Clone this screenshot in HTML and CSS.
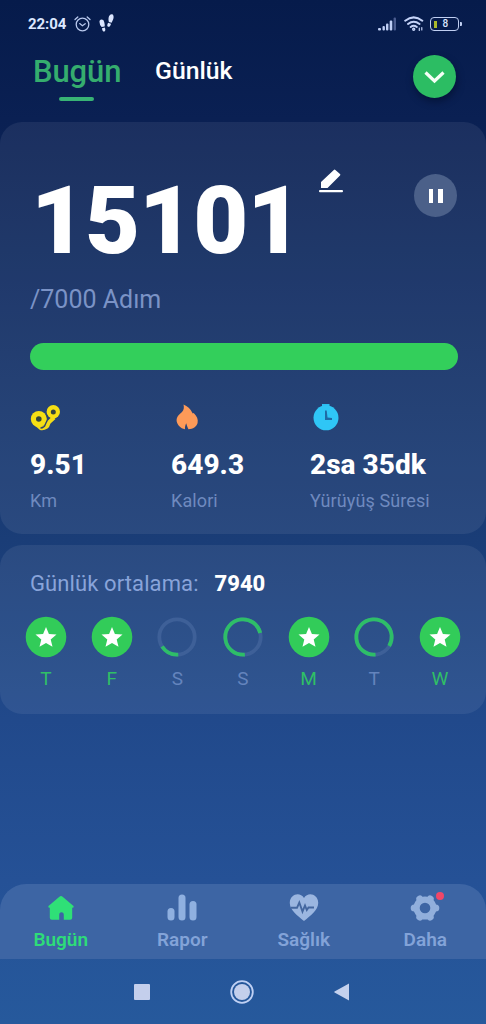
FILE: index.html
```html
<!DOCTYPE html>
<html lang="tr">
<head>
<meta charset="utf-8">
<title>Bugün</title>
<link rel="stylesheet" href="styles.css">
</head>
<body>
<div class="screen">
  <div class="status">
    <div class="status-left">
      <span class="clock">22:04</span>
      <svg class="alarm" width="17" height="16" viewBox="0 0 17 16" fill="none" stroke="#b9c9ee" stroke-width="1.3" stroke-linecap="round"><circle cx="8.500" cy="8.500" r="6.300"/><path d="M1 3.600 3.800 1M16 3.600 13.200 1M5.700 7.600l2.700 2.100 2.800-2"/></svg>
      <svg class="steps" width="15" height="18" viewBox="0 0 15 18" fill="#dce6ff"><path d="M.6 6.800Q2 4.500 4.300 6 6.200 9 5.600 12.500L2.600 13Q0 10 .6 6.800zM3 14.200l2.800-.6q1.200 2.800-.3 3.900-2.200.4-2.500-3.300zM10 2.300Q11.500-.8 13.900.6q1.300 2 .2 5l-1.500 3.100-2.700-.8q-.9-3 .1-5.600zM9.100 8.800l2.900.9q-.6 3.300-2.900 3.100-1.700-1 0-4z"/></svg>
    </div>
    <div class="status-right">
      <svg class="signal" width="19" height="14" viewBox="0 0 19 14"><g fill="#c0cff5"><rect x="0" y="11" width="3" height="2.500" rx="1"/><rect x="4.500" y="9" width="2.400" height="4.500" rx="1"/><rect x="8" y="6.500" width="2.400" height="7" rx="1"/><rect x="11.700" y="3.500" width="2.600" height="10" rx="1"/></g><rect x="15.600" y="0.500" width="2.400" height="13" rx="1" fill="#4a5c8f"/></svg>
      <svg class="wifi" width="20" height="16" viewBox="0 0 20 16" fill="none" stroke="#c5d3f8" stroke-width="2" stroke-linecap="round"><path d="M1.200 4.700Q9.700-1.900 18.300 4.700M4 8Q9.700 3.500 15.500 8M6.700 11Q9.700 8.600 12.800 11"/><circle cx="9.700" cy="13.300" r=".7"/><path d="M15.300 12v2.500M17.800 11.500v2.500" stroke-width="1.200"/></svg>
      <div class="battery"><span class="charge"></span><span class="percent">8</span></div>
    </div>
  </div>

  <header class="header">
    <div class="tab tab-active">Bugün</div>
    <div class="tab">Günlük</div>
    <div class="expand"><svg width="43" height="43" viewBox="0 0 43 43" fill="none" stroke="#f4fff6" stroke-width="3.200"><path d="M12.500 17.500l9 8.500 9-8.500"/></svg></div>
  </header>

  <section class="card today">
    <div class="count-row">
      <div class="count">15101</div>
      <svg class="edit" width="26" height="28" viewBox="0 0 26 28" fill="#fff"><path d="M3 20v-6L15.800 2q.8-.8 1.600 0l4.600 4q.8.800 0 1.600L9.500 20z"/><rect x="1" y="22" width="24" height="2.200" rx="1"/></svg>
      <div class="pause"><i></i><i></i></div>
    </div>
    <div class="goal">/7000 Adım</div>
    <div class="bar"></div>
    <div class="stats">
      <div class="stat">
        <svg width="31" height="28" viewBox="0 0 31 28"><path d="M3 20l7 6q3.500 1 7.500-1.500 2-1.500 3-5l5-4.500-3-3-6.500 6.500-3.500 4z" fill="#f3dc18"/><circle cx="8.800" cy="15" r="8" fill="#f6df14"/><circle cx="23.300" cy="7.700" r="6.700" fill="#f6df14"/><path d="M10.500 24q3.800-.2 4.800-3.500l1.700-3.800M16.300 10.500l1.700 4" fill="none" stroke="#2c426b" stroke-width="1.300"/><circle cx="8.800" cy="15" r="2.800" fill="#34463c"/><circle cx="23.300" cy="8" r="2.500" fill="#34463c"/></svg>
        <div class="value">9.51</div><div class="label">Km</div>
      </div>
      <div class="stat">
        <svg class="flame" width="24" height="28" viewBox="0 0 24 28"><path d="M7.500.5c4 1.500 7 4.500 8.800 8.300l.5.700.9-.6c3.300 3.500 4.600 6.100 3.900 10.100-1 3.800-4.600 6-9.100 6.300-.9-1.700-1.600-3.600-2.300-6.100-.9 2-1.400 4-1.200 6.100C4.300 24.300 1.500 21 .7 17.500 0 13 3 10.500 6 8c1.800-2 2.300-4.500 1.500-7.500z" fill="#fd9a58"/></svg>
        <div class="value">649.3</div><div class="label">Kalori</div>
      </div>
      <div class="stat">
        <svg class="watch" width="26" height="28" viewBox="0 0 26 28"><path d="M9 0h7.500v3H9z" fill="#2bbef2"/><circle cx="13" cy="13.800" r="12.500" fill="#2fc6f6"/><path d="M12 6.500h1.700l.8 7 4.500.5v2h-7z" fill="#1f6aa5"/></svg>
        <div class="value">2sa 35dk</div><div class="label">Yürüyüş Süresi</div>
      </div>
    </div>
  </section>

  <section class="card week">
    <div class="average"><span>Günlük ortalama:</span><b>7940</b></div>
    <div class="days">
      <div class="day done"><svg width="42" height="42" viewBox="0 0 42 42"><circle cx="21" cy="21" r="20.300"/><path d="M21 11l2.900 7 7.600.6-5.800 4.900 1.800 7.300-6.500-3.900-6.500 3.900 1.800-7.300-5.800-4.900 7.600-.6z"/></svg>T</div>
      <div class="day done"><svg width="42" height="42" viewBox="0 0 42 42"><circle cx="21" cy="21" r="20.300"/><path d="M21 11l2.900 7 7.600.6-5.800 4.900 1.800 7.300-6.500-3.900-6.500 3.900 1.800-7.300-5.800-4.900 7.600-.6z"/></svg>F</div>
      <div class="day"><svg width="42" height="42" viewBox="0 0 42 42"><circle class="track" cx="21" cy="21" r="17.700"/><circle class="arc" cx="21" cy="21" r="17.700" pathLength="100" stroke-dasharray="17 83" transform="rotate(86 21 21)"/></svg>S</div>
      <div class="day"><svg width="42" height="42" viewBox="0 0 42 42"><circle class="track" cx="21" cy="21" r="17.700"/><circle class="arc" cx="21" cy="21" r="17.700" pathLength="100" stroke-dasharray="73 27" transform="rotate(84 21 21)"/></svg>S</div>
      <div class="day done"><svg width="42" height="42" viewBox="0 0 42 42"><circle cx="21" cy="21" r="20.300"/><path d="M21 11l2.900 7 7.600.6-5.800 4.900 1.800 7.300-6.500-3.900-6.500 3.900 1.800-7.300-5.800-4.900 7.600-.6z"/></svg>M</div>
      <div class="day"><svg width="42" height="42" viewBox="0 0 42 42"><circle class="track" cx="21" cy="21" r="17.700"/><circle class="arc" cx="21" cy="21" r="17.700" pathLength="100" stroke-dasharray="85 15" transform="rotate(85 21 21)"/></svg>T</div>
      <div class="day done"><svg width="42" height="42" viewBox="0 0 42 42"><circle cx="21" cy="21" r="20.300"/><path d="M21 11l2.900 7 7.600.6-5.800 4.900 1.800 7.300-6.500-3.900-6.500 3.900 1.800-7.300-5.800-4.900 7.600-.6z"/></svg>W</div>
    </div>
  </section>

  <nav class="nav">
    <div class="item current"><svg width="28" height="28" viewBox="0 0 28 28" fill="#2fe077"><path d="M12.400 2.700q1.600-1.400 3.200 0L26.500 12q1 1.500-1 1.700h-.3v10q0 2-2 2h-6.400V21q0-2.700-2.300-2.700T12.200 21v4.700H4.800q-2 0-2-2v-10h-.3q-2-.2-1-1.700z"/></svg>Bugün</div>
    <div class="item"><svg width="30" height="28" viewBox="0 0 30 28" fill="#8fb0e0"><rect x=".5" y="14" width="7" height="12.500" rx="3.500"/><rect x="11.500" y="0.500" width="7" height="26" rx="3.500"/><rect x="22.500" y="7" width="7" height="19.500" rx="3.500"/></svg>Rapor</div>
    <div class="item"><svg width="30" height="28" viewBox="0 0 30 28"><path d="M15 27C8 21 .5 16 .8 8.500 1.200 0 11-2.500 15 4 19-2.500 28.800 0 29.200 8.500 29.500 16 22 21 15 27z" fill="#9bb6e0"/><path d="M2 13.800h6l2.300-5.300 3.200 9 2.500-6 1.800 4.500 1.700-2.500H25" fill="none" stroke="#44679f" stroke-width="1.900"/></svg>Sağlık</div>
    <div class="item more"><svg width="30" height="28" viewBox="0 0 30 28" fill="none" stroke="#91afdc"><circle cx="15" cy="14" r="8.500" stroke-width="6"/><path d="M22 14h3.800M18.500 20.100l1.700 2.900M11.500 20.100l-1.700 2.900M8 14H4.200M11.500 7.900L9.800 5M18.500 7.900L20.200 5" stroke-width="7" stroke-linecap="round"/><circle cx="15" cy="14" r="5.300" fill="#3d65a4" stroke="none"/></svg><i class="dot"></i>Daha</div>
  </nav>

  <div class="system">
    <svg width="16" height="16" viewBox="0 0 16 16"><rect width="16" height="16" rx="1" fill="#c4cfec"/></svg>
    <svg width="24" height="24" viewBox="0 0 24 24"><circle cx="12" cy="12" r="10.800" fill="none" stroke="#bfd0f4" stroke-width="1.800"/><circle cx="12" cy="12" r="8" fill="#c4cfec"/></svg>
    <svg width="16" height="18" viewBox="0 0 16 18"><path d="M.5 8.500q-.5.500 0 1L15 17.500V.5z" fill="#c4d1ee"/></svg>
  </div>
</div>
</body>
</html>
```

FILE: styles.css
```css
* { box-sizing: border-box; }
body { margin: 0; font-family: Roboto, "Liberation Sans", sans-serif; color: #fff; }
svg { display: block; flex: none; }
i { display: block; }

.screen {
  width: 486px; height: 1024px; overflow: hidden;
  display: flex; flex-direction: column;
  background: linear-gradient(#061b4b 0, #0a2053 120px, #1a3d77 540px, #21498b 720px, #255196 880px, #26599c 1024px);
}

.status { height: 48px; display: flex; justify-content: space-between; padding: 0 25px 0 28px; }
.status-left, .status-right { display: flex; align-items: flex-start; }
.clock { font-size: 15px; font-weight: 700; line-height: 18px; color: #dce7ff; width: 47px; letter-spacing: -.1px; padding-top: 15px; }
.alarm { margin: 16px 8px 0 -1px; }
.steps { margin-top: 14px; }
.signal { margin: 17px 7px 0 0; }
.wifi { margin: 16px 6px 0 0; }
.battery {
  position: relative; width: 29px; height: 14px; margin: 17px 2px 0 0;
  border: 1.500px solid #c0cff2; border-radius: 4px;
  display: flex; align-items: center; padding-left: 3px;
}
.battery::after { content: ""; position: absolute; right: -4px; top: 4px; width: 2px; height: 4px; background: #c0cff2; border-radius: 0 1px 1px 0; }
.charge { width: 2.500px; height: 7px; background: #a9b82b; }
.percent { font-size: 10px; line-height: 12px; font-weight: 500; margin-left: 6px; color: #dce7ff; }

.header { height: 74px; display: flex; align-items: flex-start; padding: 0 30px 0 33px; }
.tab { font-size: 24.800px; font-weight: 500; line-height: 30px; padding-top: 8px; }
.tab-active {
  width: 122px; padding-top: 6px; font-size: 31px; line-height: 36px; letter-spacing: -.1px; color: #35ad6e;
}
.tab-active::after { content: ""; display: block; width: 35px; height: 4px; margin: 7px 0 0 26px; border-radius: 2px; background: #38b375; }
.expand { width: 43px; height: 43px; margin: 7px 0 0 auto; border-radius: 50%; background: #2cbd63; box-shadow: 1px 4px 7px rgba(0, 12, 40, .55); }

.card { border-radius: 22px; background: rgba(255, 255, 255, .07); padding: 0 28px 0 30px; }
.today { height: 412px; }
.count-row { display: flex; height: 163px; }
.count { width: 288px; font-size: 95px; line-height: 112px; padding: 43px 0 0 1px; font-weight: 900; letter-spacing: -1px; }
.edit { margin-top: 46px; }
.pause { width: 43px; height: 43px; margin: 52px 1px 0 auto; border-radius: 50%; background: #4b6089; display: flex; align-items: center; justify-content: center; gap: 5px; }
.pause i { width: 4.500px; height: 14px; background: #fff; }
.goal { font-size: 25px; line-height: 30px; height: 58px; color: #7b93c6; }
.bar { height: 27px; border-radius: 14px; background: #33cf5b; }
.stats { display: grid; grid-template-columns: 141px 139px 1fr; padding-top: 34px; }
.flame { margin-left: 5px; }
.watch { margin-left: 3px; }
.value { font-size: 28px; line-height: 34px; font-weight: 800; padding-top: 16px; letter-spacing: .05px; }
.label { font-size: 18px; line-height: 22px; padding-top: 8px; color: #6f8abf; letter-spacing: .1px; }

.week { height: 169px; margin-top: 11px; padding: 25px 25px 0; }
.average { padding-left: 5px; font-size: 22px; line-height: 28px; color: #89a4da; display: flex; gap: 16px; }
.average span { letter-spacing: .1px; }
.average b { color: #fff; font-weight: 800; }
.days { display: flex; justify-content: space-between; margin-top: 18px; }
.day { width: 42px; text-align: center; font-size: 19px; line-height: 24px; color: #6484bd; }
.day svg { margin-bottom: 9px; }
.done { color: #30bf66; }
.done circle { fill: #32cc59; }
.done path { fill: #fff; }
.track, .arc { fill: none; stroke-width: 3.800; }
.track { stroke: #3e6098; }
.arc { stroke: #2ebe68; }

.nav { height: 75px; margin-top: 170px; border-radius: 26px 26px 0 0; background: #3d65a4; display: grid; grid-template-columns: repeat(4, 1fr); }
.item { position: relative; display: flex; flex-direction: column; align-items: center; padding-top: 10px; font-size: 19px; font-weight: 600; line-height: 24px; color: #83a3d8; }
.item svg { margin-bottom: 6px; }
.current { color: #2edc79; }
.dot { position: absolute; left: 71px; top: 8px; width: 8px; height: 8px; border-radius: 50%; background: #f14768; }

.system { height: 65px; display: flex; align-items: center; justify-content: center; gap: 80px; padding-right: 2px; }
```
